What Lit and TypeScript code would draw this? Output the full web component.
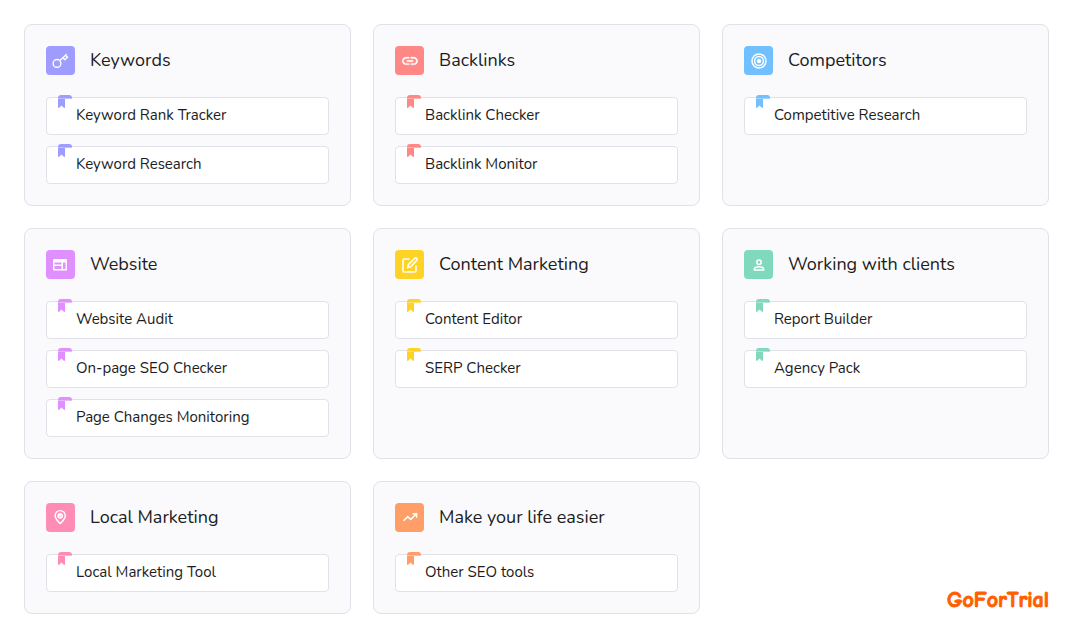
import { LitElement, html, css, svg, TemplateResult } from "lit";
import { customElement, property } from "lit/decorators.js";

interface Group {
  title: string;
  tone: string;
  icon: TemplateResult;
  tools: string[];
}

const icons = {
  key: svg`<g fill="none" stroke="#fff" stroke-width="1.4">
    <circle cx="11" cy="17.4" r="3.9"/>
    <path d="M13.800 14.600 20.800 8.200M16.900 11.800l1.900 2 2.800-2.600-1.900-2" stroke-linejoin="round"/>
  </g>`,
  link: svg`<g transform="translate(5.6 5.6) scale(.78)" fill="#fff" stroke="#fff" stroke-width=".4">
    <path d="M3.9 12c0-1.71 1.39-3.1 3.1-3.1h4V7H7c-2.76 0-5 2.24-5 5s2.24 5 5 5h4v-1.9H7c-1.71 0-3.1-1.39-3.1-3.1zM8 13h8v-2H8v2zm9-6h-4v1.9h4c1.71 0 3.1 1.39 3.1 3.1s-1.39 3.1-3.1 3.1h-4V17h4c2.76 0 5-2.24 5-5s-2.24-5-5-5z"/>
  </g>`,
  target: svg`<g fill="none" stroke="#fff" stroke-width="1.5">
    <circle cx="15" cy="15" r="7"/><circle cx="15" cy="15" r="4.4"/>
    <circle cx="15" cy="15" r="2.2" fill="#fff" stroke="none"/>
  </g>`,
  web: svg`<path fill="#fff" fill-rule="evenodd" d="M8.2 9h11.6Q21 9 21 10.2v9.2q0 1.2-1.2 1.2H8.2Q7 20.600 7 19.400v-9.200Q7 9 8.200 9zM8.500 12.400v2.200h7v-2.200zM8.500 16v3h7v-3zM17 12.400v6.600h2.500v-6.600z"/>`,
  edit: svg`<g fill="none" stroke="#fff" stroke-width="1.600" stroke-linejoin="round" stroke-linecap="round">
    <path d="M14 9H9.300Q8 9 8 10.300v10.400Q8 22 9.300 22h10.400q1.300 0 1.300-1.300V16"/>
    <path d="M19.700 8.300a1.500 1.500 0 0 1 2.100 2.100L15.600 16.700l-3 .9.800-3z"/>
  </g>`,
  person: svg`<g fill="none" stroke="#fff" stroke-width="1.500">
    <circle cx="15" cy="12.200" r="2.200"/>
    <path d="M10.300 20v-.8c0-1.800 3.100-2.500 4.700-2.500s4.700.7 4.700 2.500v.8z" stroke-linejoin="round"/>
  </g>`,
  pin: svg`<path fill="none" stroke="#fff" stroke-width="1.400" stroke-linejoin="round" d="M14.200 20.600c-1.800-1.900-5.100-4.700-5.100-7.900a5.100 5.100 0 0 1 10.200 0c0 3.200-3.300 6-5.100 7.900z"/>
    <circle cx="14.200" cy="12.800" r="2.900" fill="#fff"/>
    <path d="M13.200 13.200l1 1 1.700-2" fill="none" stroke="currentColor" stroke-width=".5"/>`,
  trend: svg`<path fill="none" stroke="#fff" stroke-width="1.500" d="M8.600 17.800l4.200-4.200 2.900 2.900 5.400-5.400M17.600 10.800h4v4"/>`,
};

const groups: Group[] = [
  { title: "Keywords", tone: "violet", icon: icons.key, tools: ["Keyword Rank Tracker", "Keyword Research"] },
  { title: "Backlinks", tone: "coral", icon: icons.link, tools: ["Backlink Checker", "Backlink Monitor"] },
  { title: "Competitors", tone: "blue", icon: icons.target, tools: ["Competitive Research"] },
  { title: "Website", tone: "orchid", icon: icons.web, tools: ["Website Audit", "On-page SEO Checker", "Page Changes Monitoring"] },
  { title: "Content Marketing", tone: "yellow", icon: icons.edit, tools: ["Content Editor", "SERP Checker"] },
  { title: "Working with clients", tone: "green", icon: icons.person, tools: ["Report Builder", "Agency Pack"] },
  { title: "Local Marketing", tone: "pink", icon: icons.pin, tools: ["Local Marketing Tool"] },
  { title: "Make your life easier", tone: "orange", icon: icons.trend, tools: ["Other SEO tools"] },
];

@customElement("tool-card")
export class ToolCard extends LitElement {
  @property({ attribute: false }) group!: Group;

  static styles = css`
    :host {
      display: block;
    }
    .card {
      box-sizing: border-box;
      height: 100%;
      padding: 21px;
      border: 1px solid #e1e1e9;
      border-radius: 8px;
      background: #fafafc;
    }
    .head {
      display: flex;
      align-items: flex-start;
      gap: 15px;
      margin-bottom: 22px;
    }
    .badge {
      display: block;
      flex: none;
      width: 29px;
      height: 29px;
      border-radius: 4px;
      background: currentColor;
    }
    .title {
      margin: 0;
      color: #1c1c22;
      font-size: 18px;
      line-height: 28px;
      font-weight: 400;
    }
    .list {
      display: grid;
      gap: 11px;
      margin: 0;
      padding: 0;
      list-style: none;
    }
    .tool {
      position: relative;
      display: block;
      padding: 7px 29px 9px;
      border: 1px solid #e1e1e9;
      border-radius: 4px;
      background: #fff;
      color: #1c1c22;
      font-size: 15px;
      line-height: 20px;
      text-decoration: none;
    }
    .mark {
      position: absolute;
      left: 11px;
      top: -3px;
      width: 14px;
      height: 14px;
    }
    .violet { color: #9e9cff; }
    .coral { color: #ff8785; }
    .blue { color: #70bfff; }
    .orchid { color: #e08fff; }
    .yellow { color: #ffd226; }
    .green { color: #80d9bd; }
    .pink { color: #ff8cb5; }
    .orange { color: #ff9e66; }
  `;

  render() {
    const { title, tone, icon, tools } = this.group;
    return html`
      <section class="card">
        <div class="head">
          <svg class="badge ${tone}" viewBox="0 0 29 29" aria-hidden="true">${icon}</svg>
          <h2 class="title">${title}</h2>
        </div>
        <ul class="list">
          ${tools.map(
            (tool) => html`<li>
              <a class="tool" href="#">
                <svg class="mark ${tone}" viewBox="0 0 14 14" aria-hidden="true">
                  <path fill="currentColor" d="M0 4V3Q0 0 3 0H11Q14 0 14 3V4H7V12Q7 13.500 5.500 12.500L3.500 10.500L1.500 12.500Q0 13.500 0 12Z" />
                  <path fill="#fff" fill-opacity=".35" d="M0 3H14V4H0Z" />
                </svg>
                ${tool}
              </a>
            </li>`
          )}
        </ul>
      </section>
    `;
  }
}

@customElement("app-root")
export class AppRoot extends LitElement {
  static styles = css`
    :host {
      display: block;
      background: #fff;
      font-family: Nunito, "Noto Sans", "Open Sans", sans-serif;
    }
    .grid {
      display: grid;
      grid-template-columns: repeat(3, minmax(0, 1fr));
      gap: 22px;
      padding: 24px 24px 15px;
    }
    .brand {
      align-self: end;
      justify-self: end;
      color: #ff5f00;
      font-family: "Comic Neue", "Open Sans", sans-serif;
      font-size: 22px;
      line-height: 28px;
      font-weight: 700;
      -webkit-text-stroke: 1px #ff5f00;
    }
  `;

  render() {
    return html`
      <main class="grid">
        ${groups.map((group) => html`<tool-card .group=${group}></tool-card>`)}
        <div class="brand">GoForTrial</div>
      </main>
    `;
  }
}
